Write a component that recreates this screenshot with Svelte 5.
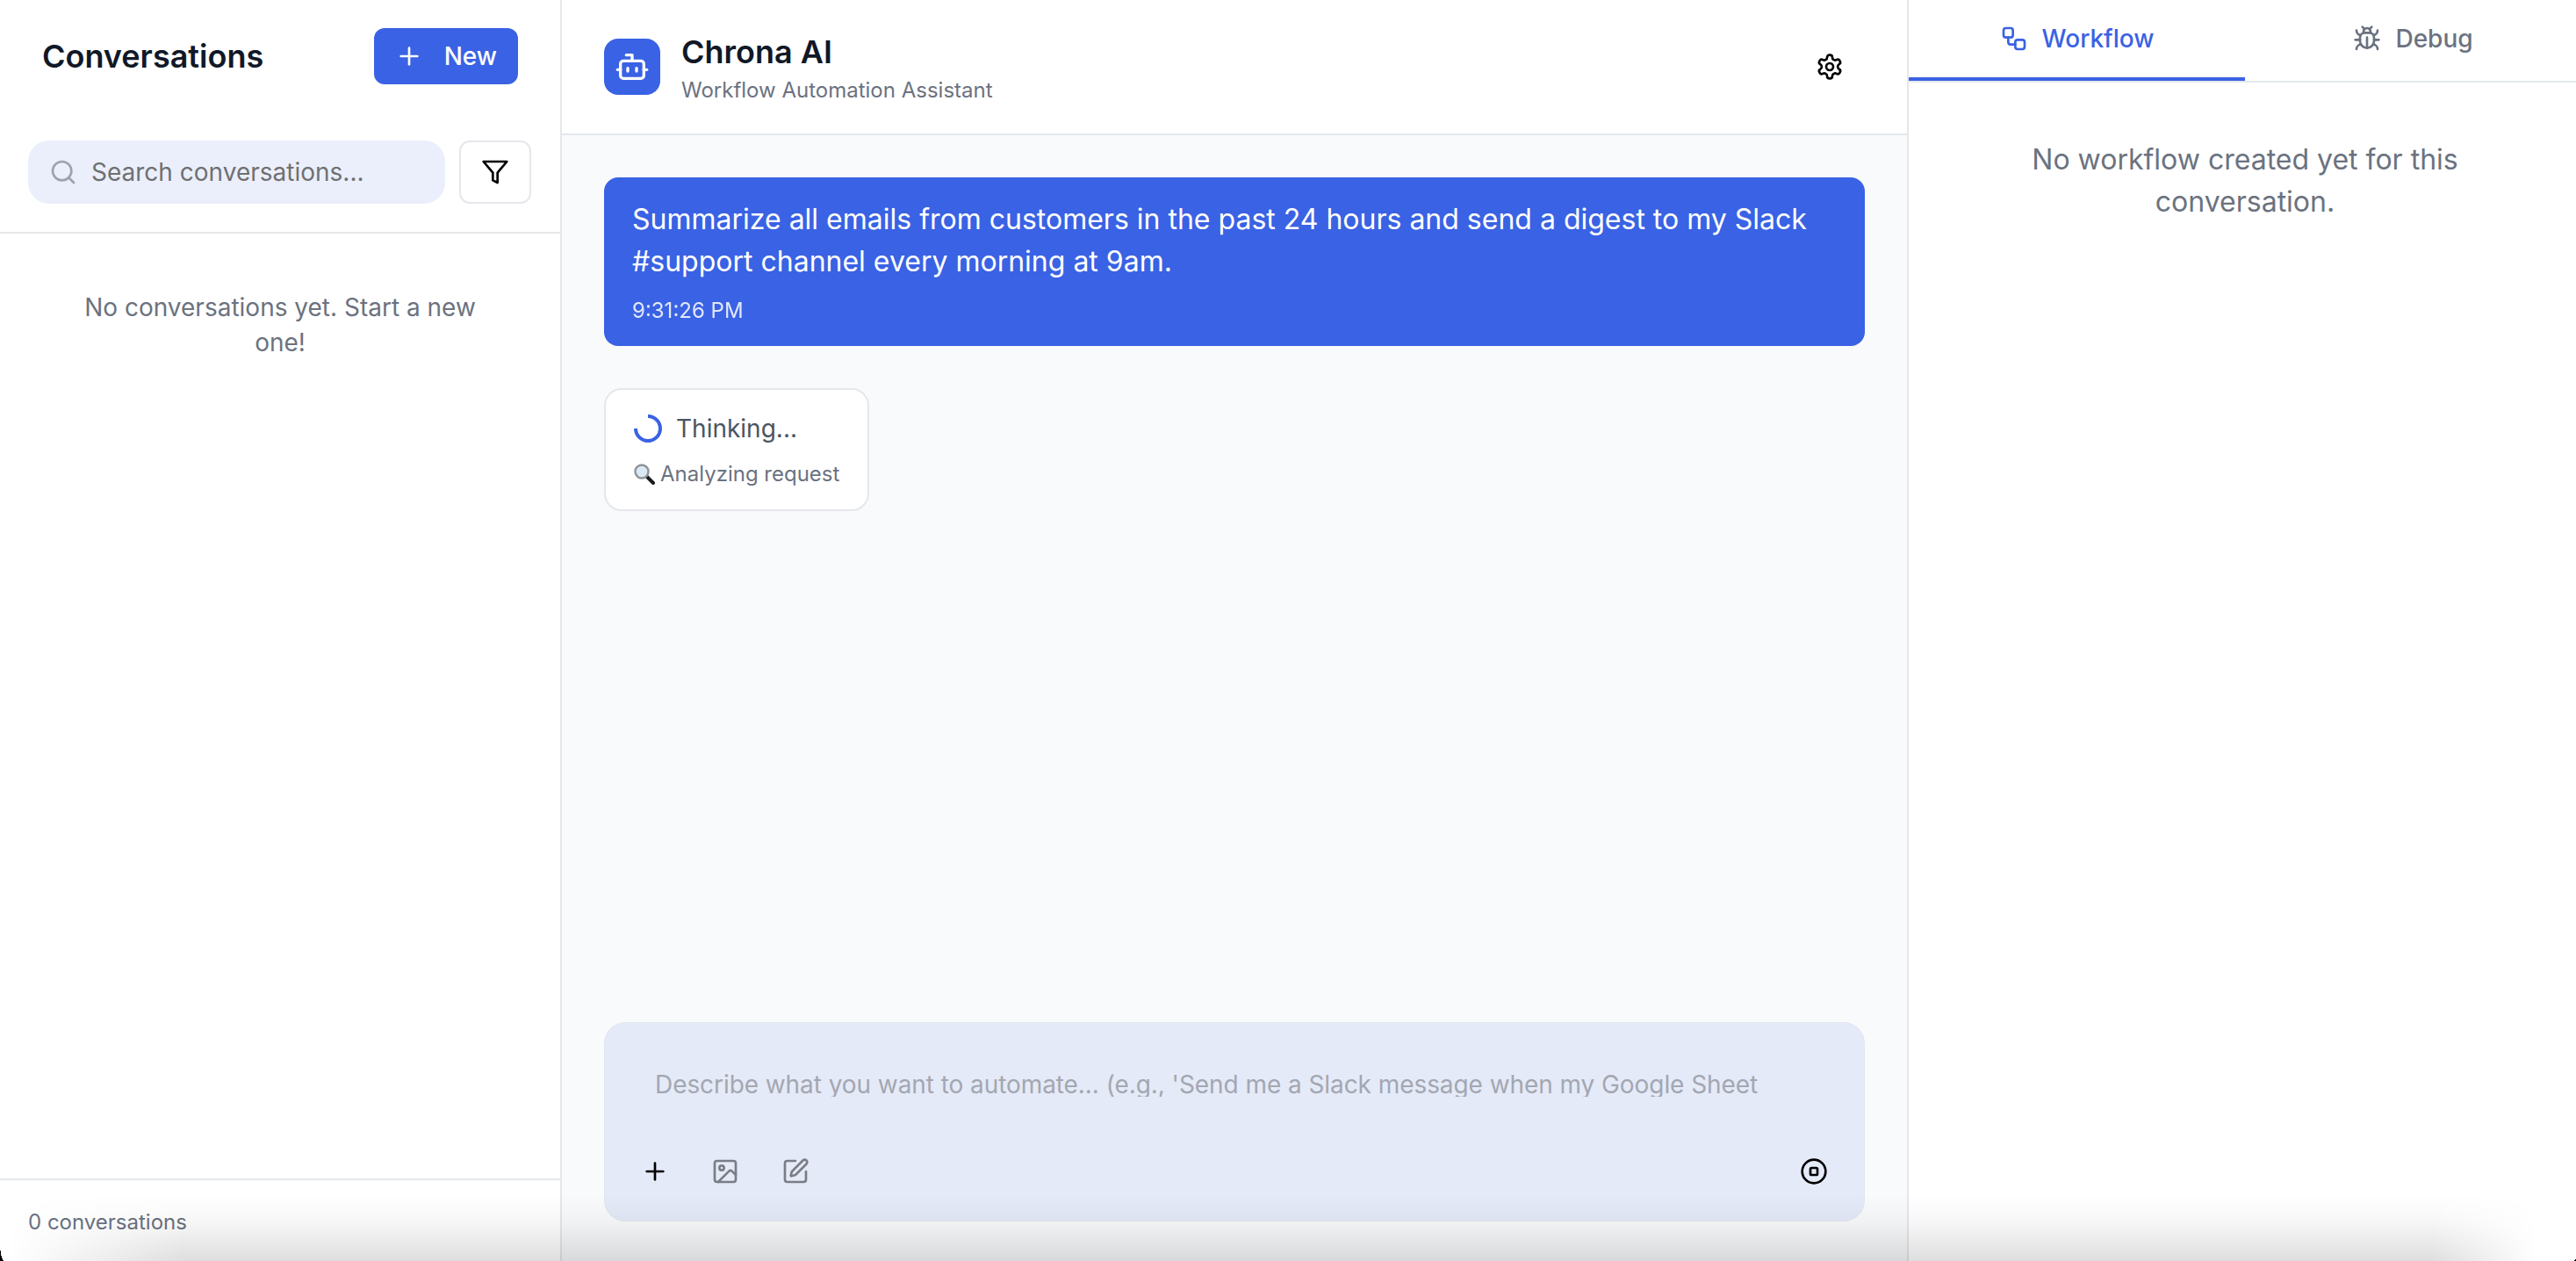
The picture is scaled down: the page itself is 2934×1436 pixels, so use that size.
<script>
  let conversations = [];
  let tab = 'workflow';
  let query = '';
  let draft = '';
</script>

<div class="app">
  <aside class="sidebar">
    <header class="side-head">
      <h2>Conversations</h2>
      <button class="new-btn">
        <svg viewBox="0 0 24 24" class="ic"><path d="M5 12h14" /><path d="M12 5v14" /></svg>
        New
      </button>
    </header>
    <div class="search-row">
      <label class="search">
        <svg viewBox="0 0 24 24" class="ic"><circle cx="11" cy="11" r="8" /><path d="m21 21-4.3-4.3" /></svg>
        <input placeholder="Search conversations..." bind:value={query} />
      </label>
      <button class="filter-btn" aria-label="Filter">
        <svg viewBox="0 0 24 24" class="ic"><polygon points="22 3 2 3 10 12.46 10 19 14 21 14 12.46 22 3" /></svg>
      </button>
    </div>
    <div class="side-list">
      {#if conversations.length === 0}
        <p>No conversations yet. Start a new one!</p>
      {/if}
    </div>
    <footer class="side-foot">{conversations.length} conversations</footer>
  </aside>

  <main class="chat">
    <header class="chat-head">
      <div class="logo">
        <svg viewBox="0 0 24 24" class="ic">
          <path d="M12 8V4H8" /><rect width="16" height="12" x="4" y="8" rx="2" /><path d="M2 14h2" /><path d="M20 14h2" /><path d="M15 13v2" /><path d="M9 13v2" />
        </svg>
      </div>
      <div class="titles">
        <h1>Chrona AI</h1>
        <p>Workflow Automation Assistant</p>
      </div>
      <button class="settings" aria-label="Settings">
        <svg viewBox="0 0 24 24" class="ic">
          <path d="M12.22 2h-.44a2 2 0 0 0-2 2v.18a2 2 0 0 1-1 1.73l-.43.25a2 2 0 0 1-2 0l-.15-.08a2 2 0 0 0-2.73.73l-.22.38a2 2 0 0 0 .73 2.73l.15.1a2 2 0 0 1 1 1.72v.51a2 2 0 0 1-1 1.74l-.15.09a2 2 0 0 0-.73 2.73l.22.38a2 2 0 0 0 2.73.73l.15-.08a2 2 0 0 1 2 0l.43.25a2 2 0 0 1 1 1.73V20a2 2 0 0 0 2 2h.44a2 2 0 0 0 2-2v-.18a2 2 0 0 1 1-1.73l.43-.25a2 2 0 0 1 2 0l.15.08a2 2 0 0 0 2.73-.73l.22-.39a2 2 0 0 0-.73-2.73l-.15-.08a2 2 0 0 1-1-1.74v-.5a2 2 0 0 1 1-1.74l.15-.09a2 2 0 0 0 .73-2.73l-.22-.38a2 2 0 0 0-2.73-.73l-.15.08a2 2 0 0 1-2 0l-.43-.25a2 2 0 0 1-1-1.73V4a2 2 0 0 0-2-2z" />
          <circle cx="12" cy="12" r="3" />
        </svg>
      </button>
    </header>

    <section class="messages">
      <div class="bubble">
        <p>Summarize all emails from customers in the past 24 hours and send a digest to my Slack #support channel every morning at 9am.</p>
        <time>9:31:26 PM</time>
      </div>
      <div class="thinking">
        <div class="thinking-top">
          <svg viewBox="0 0 32 32" class="spinner"><path d="M16 2a14 14 0 1 1-14 14" /></svg>
          <span>Thinking...</span>
        </div>
        <div class="step">
          <svg viewBox="0 0 24 24" class="glass">
            <path class="handle" d="M14.5 14.5 22 22" />
            <circle class="lens" cx="9" cy="9" r="7.5" />
          </svg>
          <span>Analyzing request</span>
        </div>
      </div>
    </section>

    <div class="composer">
      <input
        placeholder="Describe what you want to automate... (e.g., 'Send me a Slack message when my Google Sheet gets updated')"
        bind:value={draft}
      />
      <div class="tools">
        <button class="tool dark" aria-label="Add">
          <svg viewBox="0 0 24 24" class="ic"><path d="M5 12h14" /><path d="M12 5v14" /></svg>
        </button>
        <button class="tool" aria-label="Image">
          <svg viewBox="0 0 24 24" class="ic"><rect width="18" height="18" x="3" y="3" rx="2" /><circle cx="9" cy="9" r="2" /><path d="m21 15-3.086-3.086a2 2 0 0 0-2.828 0L6 21" /></svg>
        </button>
        <button class="tool" aria-label="Edit">
          <svg viewBox="0 0 24 24" class="ic"><path d="M12 3H5a2 2 0 0 0-2 2v14a2 2 0 0 0 2 2h14a2 2 0 0 0 2-2v-7" /><path d="M18.375 2.625a1 1 0 0 1 3 3l-9.013 9.014a2 2 0 0 1-.853.505l-2.873.84a.5.5 0 0 1-.62-.62l.84-2.873a2 2 0 0 1 .506-.852z" /></svg>
        </button>
        <button class="tool dark stop" aria-label="Stop">
          <svg viewBox="0 0 24 24" class="ic"><circle cx="12" cy="12" r="10" /><rect x="9" y="9" width="6" height="6" rx="1" /></svg>
        </button>
      </div>
    </div>
  </main>

  <aside class="panel">
    <nav class="tabs">
      <button class="tab" class:active={tab === 'workflow'} on:click={() => (tab = 'workflow')}>
        <svg viewBox="0 0 24 24" class="ic"><rect width="8" height="8" x="3" y="3" rx="2" /><path d="M7 11v4a2 2 0 0 0 2 2h4" /><rect width="8" height="8" x="13" y="13" rx="2" /></svg>
        Workflow
      </button>
      <button class="tab" class:active={tab === 'debug'} on:click={() => (tab = 'debug')}>
        <svg viewBox="0 0 24 24" class="ic">
          <path d="m8 2 1.88 1.88" /><path d="M14.12 3.88 16 2" /><path d="M9 7.13v-1a3.003 3.003 0 1 1 6 0v1" /><path d="M12 20c-3.3 0-6-2.7-6-6v-3a4 4 0 0 1 4-4h4a4 4 0 0 1 4 4v3c0 3.3-2.7 6-6 6" /><path d="M12 20v-9" /><path d="M6.53 9C4.6 8.8 3 7.1 3 5" /><path d="M6 13H2" /><path d="M3 21c0-2.1 1.7-3.9 3.8-4" /><path d="M20.97 5c0 2.1-1.6 3.8-3.5 4" /><path d="M22 13h-4" /><path d="M17.2 17c2.1.1 3.8 1.9 3.8 4" />
        </svg>
        Debug
      </button>
    </nav>
    <p class="panel-empty">No workflow created yet for this conversation.</p>
  </aside>

  <!-- window shadow along the bottom edge of the capture -->
  <div class="edge-shade"></div>
  <div class="corner left"></div>
  <div class="corner right"></div>
</div>

<style>
  :global(body) {
    margin: 0;
    font-family: Inter, 'Liberation Sans', sans-serif;
    color: #111827;
  }

  * {
    box-sizing: border-box;
  }

  h1,
  h2,
  p {
    margin: 0;
  }

  button {
    font: inherit;
    background: none;
    border: none;
    padding: 0;
  }

  input {
    font: inherit;
    background: transparent;
    border: none;
    outline: none;
    padding: 0;
  }

  .ic {
    width: 32px;
    height: 32px;
    flex: none;
    fill: none;
    stroke: currentColor;
    stroke-width: 2;
    stroke-linecap: round;
    stroke-linejoin: round;
  }

  .app {
    position: relative;
    display: grid;
    grid-template-columns: 640px 1534px 766px;
    height: 100vh;
    overflow: hidden;
    background: #fff;
  }

  .sidebar {
    display: flex;
    flex-direction: column;
    min-height: 0;
    border-right: 2px solid #e5e7eb;
  }

  .side-head {
    display: flex;
    align-items: center;
    justify-content: space-between;
    padding: 32px 48px 32px 48px;
  }

  .side-head h2 {
    font-size: 36px;
    line-height: 56px;
    font-weight: 600;
    color: #111827;
  }

  .new-btn {
    display: flex;
    align-items: center;
    gap: 24px;
    height: 64px;
    padding: 0 24px;
    border-radius: 12px;
    background: #3a62e4;
    color: #fff;
    font-size: 28px;
    font-weight: 500;
  }

  .search-row {
    display: flex;
    gap: 16px;
    padding: 32px 33px 32px 32px;
    border-bottom: 2px solid #e5e7eb;
  }

  .search {
    flex: 1;
    display: flex;
    align-items: center;
    gap: 16px;
    height: 72px;
    padding: 0 24px;
    border-radius: 24px;
    background: #ebeffb;
    color: #9ca3af;
    font-size: 28px;
    min-width: 0;
  }

  .search input {
    flex: 1;
    min-width: 0;
  }

  .search input::placeholder {
    color: #6f7072;
    opacity: 1;
  }

  .filter-btn {
    display: flex;
    align-items: center;
    justify-content: center;
    width: 82px;
    height: 72px;
    border: 2px solid #e5e7eb;
    border-radius: 12px;
    color: #000;
  }

  .side-list {
    flex: 1;
    padding: 64px 72px;
    text-align: center;
    font-size: 28px;
    line-height: 40px;
    color: #6b7280;
  }

  .side-foot {
    height: 94px;
    display: flex;
    align-items: center;
    padding: 2px 32px 0;
    border-top: 2px solid #e5e7eb;
    font-size: 24px;
    color: #6b7280;
  }

  .chat {
    display: flex;
    flex-direction: column;
    min-width: 0;
    min-height: 0;
    background: #f9fafb;
    border-right: 2px solid #e5e7eb;
  }

  .chat-head {
    display: flex;
    align-items: center;
    gap: 24px;
    height: 154px;
    padding: 0 48px;
    background: #fff;
    border-bottom: 2px solid #e5e7eb;
  }

  .logo {
    display: flex;
    align-items: center;
    justify-content: center;
    width: 64px;
    height: 64px;
    border-radius: 16px;
    background: #3a62e4;
    color: #fff;
  }

  .logo .ic {
    width: 40px;
    height: 40px;
  }

  .titles {
    flex: 1;
    padding-top: 2px;
  }

  .titles h1 {
    font-size: 36px;
    line-height: 48px;
    font-weight: 600;
  }

  .titles p {
    margin-top: 4px;
    font-size: 24px;
    line-height: 32px;
    color: #6b7280;
  }

  .settings {
    display: flex;
    align-items: center;
    justify-content: center;
    width: 80px;
    height: 80px;
    color: #000;
  }

  .messages {
    flex: 1;
    display: flex;
    flex-direction: column;
    align-items: flex-start;
    gap: 48px;
    padding: 48px;
    min-height: 0;
  }

  .bubble {
    width: 100%;
    padding: 24px 32px;
    border-radius: 16px;
    background: #3a62e4;
    color: #fff;
    font-size: 32px;
    line-height: 48px;
  }

  .bubble time {
    display: block;
    margin-top: 16px;
    font-size: 24px;
    line-height: 32px;
    opacity: 0.85;
  }

  .thinking {
    padding: 26px 32px 24px;
    background: #fff;
    border: 2px solid #e5e7eb;
    border-radius: 20px;
  }

  .thinking-top {
    display: flex;
    align-items: center;
    gap: 16px;
    font-size: 28px;
    line-height: 36px;
    color: #4b5563;
  }

  .spinner {
    width: 32px;
    height: 32px;
    fill: none;
    stroke: #3a62e4;
    stroke-width: 4;
  }

  .step {
    display: flex;
    align-items: center;
    gap: 6px;
    margin-top: 18px;
    font-size: 24px;
    line-height: 32px;
    color: #6b7280;
  }

  .glass {
    width: 24px;
    height: 24px;
  }

  .lens {
    fill: #dbe9f5;
    stroke: #8d9399;
    stroke-width: 2.4;
  }

  .handle {
    fill: none;
    stroke: #1b1b1b;
    stroke-width: 4;
    stroke-linecap: round;
  }

  .composer {
    display: flex;
    flex-direction: column;
    height: 227px;
    margin: 0 48px 45px;
    padding: 56px 25px 24px;
    border-radius: 24px;
    background: #e5eaf8;
    border: 1px solid #e3e6ef;
  }

  .composer input {
    display: block;
    width: 1256px;
    margin-left: 32px;
    height: 28px;
    line-height: 28px;
    font-size: 28px;
    color: #111827;
  }

  .composer input::placeholder {
    color: #a3a7b1;
    letter-spacing: -0.07px;
    opacity: 1;
  }

  .tools {
    display: flex;
    align-items: center;
    gap: 16px;
    margin-top: auto;
  }

  .tool {
    display: flex;
    align-items: center;
    justify-content: center;
    width: 64px;
    height: 64px;
    color: #7a7d85;
  }

  .tool.dark {
    color: #000;
  }

  .tool.stop {
    margin-left: auto;
  }

  .panel {
    display: flex;
    flex-direction: column;
    min-height: 0;
  }

  .tabs {
    display: flex;
    height: 94px;
    border-bottom: 2px solid #e5e7eb;
  }

  .tab {
    flex: 1;
    display: flex;
    align-items: center;
    justify-content: center;
    gap: 16px;
    height: 92px;
    border-bottom: 4px solid transparent;
    font-size: 28px;
    font-weight: 500;
    color: #6b7280;
  }

  .tab.active {
    color: #3a62e4;
    border-bottom-color: #3a62e4;
  }

  .panel-empty {
    padding: 64px;
    text-align: center;
    font-size: 32px;
    line-height: 48px;
    color: #6b7280;
  }

  .edge-shade {
    position: absolute;
    left: 0;
    right: 0;
    bottom: 0;
    height: 76px;
    pointer-events: none;
    background: linear-gradient(to bottom, rgba(0, 0, 0, 0), rgba(0, 0, 0, 0.03) 41%, rgba(0, 0, 0, 0.13));
    mask-image: linear-gradient(to right, transparent 10px, #000 210px, #000 2770px, transparent 2890px);
    -webkit-mask-image: linear-gradient(to right, transparent 10px, #000 210px, #000 2770px, transparent 2890px);
  }

  .corner {
    position: absolute;
    bottom: 0;
    pointer-events: none;
  }

  .corner.left {
    left: 0;
    width: 5px;
    height: 20px;
    background: radial-gradient(ellipse 100% 100% at 100% 0, transparent 98%, #000 100%);
  }

  .corner.right {
    right: 0;
    width: 3px;
    height: 4px;
    background: radial-gradient(ellipse 100% 100% at 0 0, transparent 98%, #000 100%);
  }
</style>
